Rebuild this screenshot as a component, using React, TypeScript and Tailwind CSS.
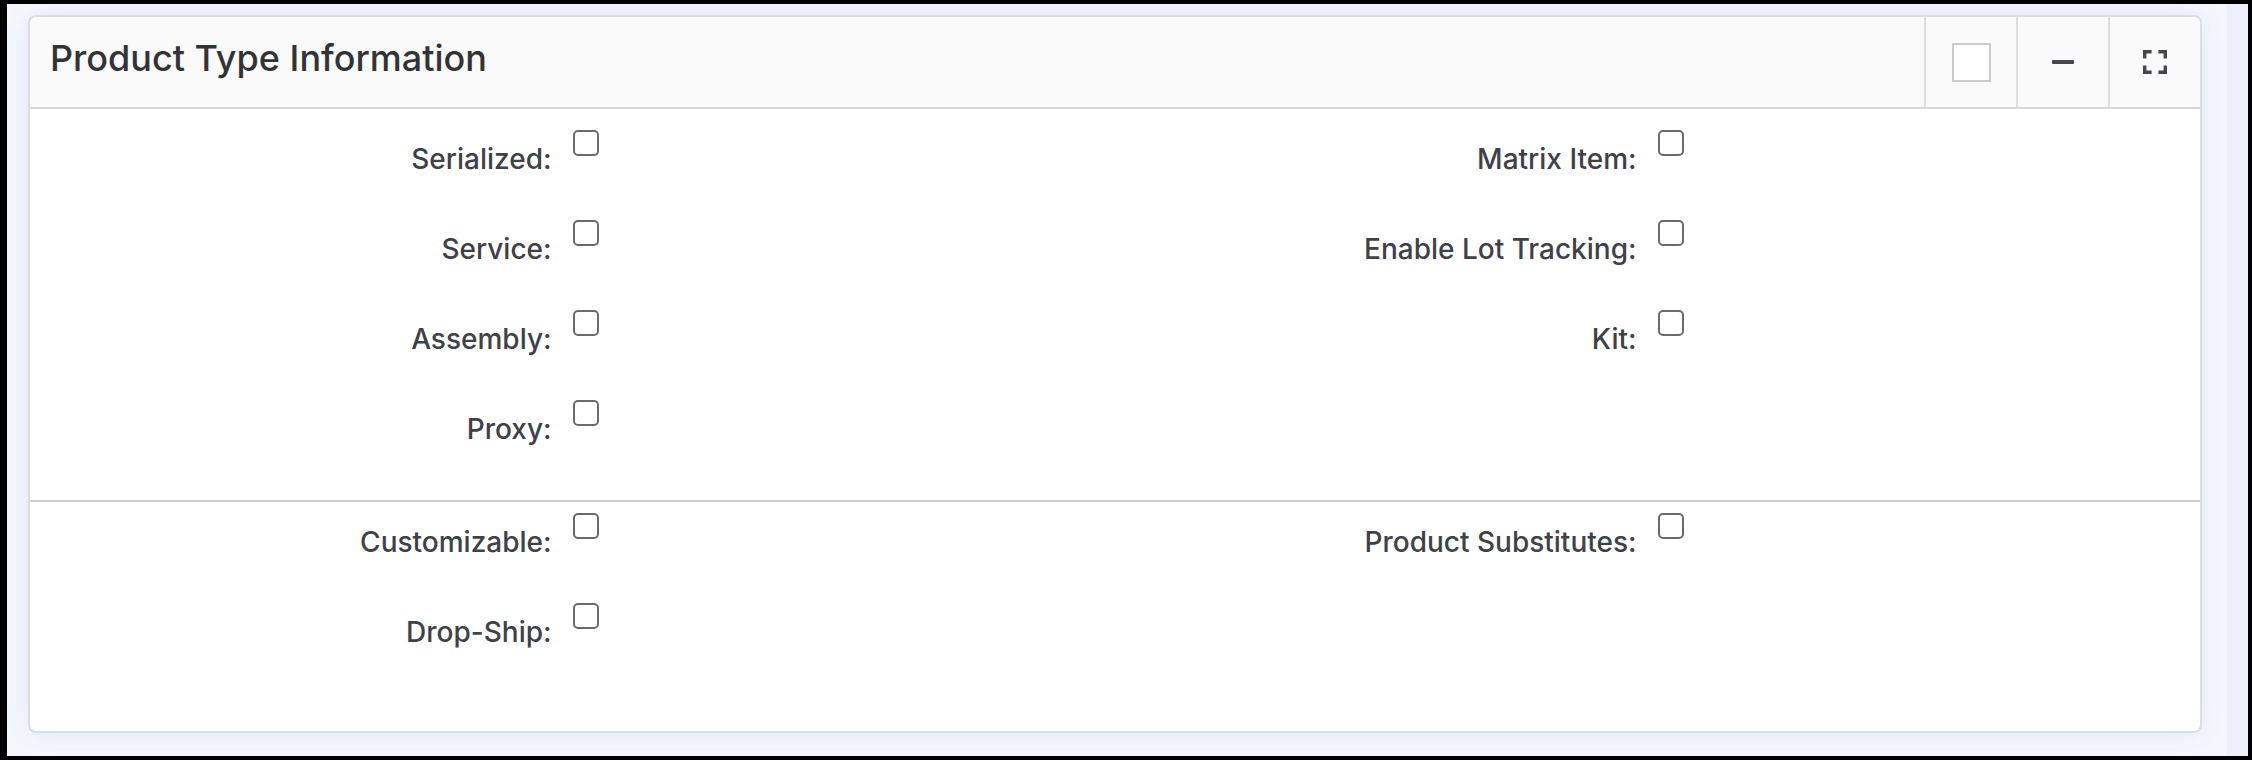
const sectionOne: (string | null)[] = [
  "Serialized:",
  "Matrix Item:",
  "Service:",
  "Enable Lot Tracking:",
  "Assembly:",
  "Kit:",
  "Proxy:",
  null,
];

const sectionTwo: (string | null)[] = ["Customizable:", "Product Substitutes:", "Drop-Ship:", null];

function CheckRow({ label }: { label: string | null }) {
  if (!label) return <div className="h-[90px]" />;
  return (
    <label className="flex h-[90px] items-start">
      <span className="w-1/2 pr-[21px] pt-[20px] text-right text-[28px] leading-[40px] font-medium text-[#404148]">
        {label}
      </span>
      <span className="mt-[11px] h-[26px] w-[26px] rounded-[5px] border-2 border-[#6a6a6e] bg-white" />
    </label>
  );
}

function FullscreenIcon() {
  return (
    <svg viewBox="5 5 14 14" className="h-[24px] w-[24px]" fill="#45464a">
      <path d="M7 14H5v5h5v-2H7v-3zm-2-4h2V7h3V5H5v5zm12 7h-3v2h5v-5h-2v3zM14 5v2h3v3h2V5h-5z" />
    </svg>
  );
}

export default function App() {
  return (
    <div
      className="h-[760px] w-[2252px] bg-black pt-[4px] pl-[7px] pr-[4px] pb-[4px]"
      style={{ fontFamily: "Inter, 'Noto Sans', sans-serif" }}
    >
      <div className="flex h-full bg-[#f6f7fd]">
        <div className="flex-1 pl-[21px] pt-[11px] pr-[25px] pb-[23px]">
          {/* Panel */}
          <div className="flex h-full flex-col overflow-hidden rounded-[8px] border-2 border-[#dcdce2] bg-white shadow-[0_0_24px_rgba(90,100,200,0.12)]">
            <div className="flex h-[92px] items-stretch border-b-2 border-[#d8d8d8] bg-[#fafafa]">
              <h2 className="flex flex-1 items-center pl-[20px] pb-[8px] text-[36px] font-medium text-[#333336]">
                Product Type Information
              </h2>
              <div className="flex w-[92px] items-center justify-center border-l-2 border-[#dedede]">
                <span className="h-[39px] w-[39px] border-2 border-[#cbcbcb] bg-white" />
              </div>
              <div className="flex w-[92px] items-center justify-center border-l-2 border-[#dedede]">
                <span className="h-[4px] w-[22px] rounded-[1px] bg-[#45464a]" />
              </div>
              <div className="flex w-[92px] items-center justify-center border-l-2 border-[#dedede]">
                <FullscreenIcon />
              </div>
            </div>

            {/* Section 1 */}
            <div className="grid grid-cols-2 border-b-2 border-[#cccccc] pt-[10px] pb-[21px]">
              {sectionOne.map((l, i) => (
                <CheckRow key={i} label={l} />
              ))}
            </div>

            {/* Section 2 */}
            <div className="grid grid-cols-2">
              {sectionTwo.map((l, i) => (
                <CheckRow key={i} label={l} />
              ))}
            </div>
          </div>
        </div>
        <div className="w-[21px] bg-[#eef0fb]" />
      </div>
    </div>
  );
}
